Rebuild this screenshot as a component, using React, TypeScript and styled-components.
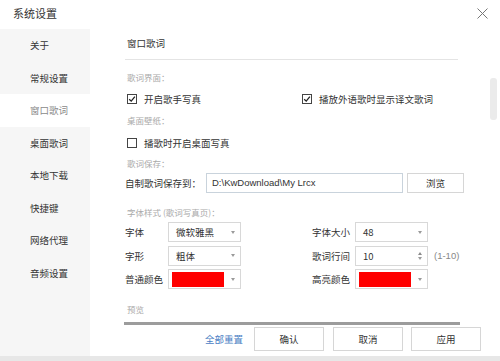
import styled, { createGlobalStyle } from "styled-components";

const GlobalStyle = createGlobalStyle`
  html, body {
    margin: 0;
    padding: 0;
    background: #ffffff;
  }
  body {
    font-family: "Noto Sans CJK SC", "Noto Sans", sans-serif;
    color: #333333;
  }
`;

const menuItems = ["关于", "常规设置", "窗口歌词", "桌面歌词", "本地下载", "快捷键", "网络代理", "音频设置"];

const Window = styled.div`
  width: 500px;
  height: 361px;
  display: flex;
  flex-direction: column;
  overflow: hidden;
  background: #ffffff;
`;

const TitleBar = styled.div`
  height: 29px;
  display: flex;
  align-items: center;
  justify-content: space-between;
  padding: 0 12px 3px 13px;
  box-sizing: border-box;
  font-size: 11px;
  color: #333;
`;

const Main = styled.div`
  flex: 1;
  display: flex;
  min-height: 0;
`;

const Sidebar = styled.div`
  width: 90px;
  background: #f6f6f6;
  display: flex;
  flex-direction: column;
`;

const MenuItem = styled.div<{ $active?: boolean }>`
  height: 32.5px;
  line-height: 32.5px;
  padding-left: 30px;
  font-size: 9.5px;
  background: ${(p) => (p.$active ? "#ffffff" : "transparent")};
  color: ${(p) => (p.$active ? "#8a8a8a" : "#333")};
`;

const Content = styled.div`
  flex: 1;
  padding-left: 35px;
  display: flex;
  flex-direction: column;
  font-size: 9.5px;
`;

const Header = styled.div`
  width: 333px;
  padding: 6px 0 8px 2px;
  line-height: 16px;
  border-bottom: 1px solid #e4e4e4;
  box-sizing: border-box;
  height: 31px;
`;

const SectionLabel = styled.div<{ $top?: number; $h?: number }>`
  margin-top: ${(p) => p.$top ?? 0}px;
  height: ${(p) => p.$h ?? 21}px;
  line-height: ${(p) => p.$h ?? 21}px;
  padding-left: 2px;
  font-size: 8.5px;
  color: #aaaaaa;
`;

const CheckRow = styled.div<{ $h: number }>`
  height: ${(p) => p.$h}px;
  display: flex;
  align-items: center;
  padding-left: 2px;
`;

const CheckItem = styled.label<{ $w?: number }>`
  display: flex;
  align-items: center;
  gap: 7px;
  width: ${(p) => (p.$w ? `${p.$w}px` : "auto")};
`;

const Box = styled.span`
  width: 10px;
  height: 10px;
  border: 1px solid #444;
  box-sizing: border-box;
  display: flex;
  align-items: center;
  justify-content: center;
  background: #fff;
`;

const PathRow = styled.div`
  height: 20px;
  display: flex;
  align-items: center;
`;

const PathLabel = styled.span`
  width: 81px;
`;

const PathInput = styled.div`
  width: 197px;
  height: 20px;
  box-sizing: border-box;
  border: 1px solid #c9d3dc;
  padding-left: 5px;
  line-height: 18px;
  font-family: "Liberation Sans", "Noto Sans CJK SC", sans-serif;
  font-size: 9.5px;
`;

const Button = styled.div<{ $w: number; $h: number }>`
  width: ${(p) => p.$w}px;
  height: ${(p) => p.$h}px;
  box-sizing: border-box;
  border: 1px solid #d6d6d6;
  background: #fff;
  display: flex;
  align-items: center;
  justify-content: center;
  font-size: 9.5px;
  color: #333;
`;

const FieldRow = styled.div`
  height: 20px;
  margin-bottom: 3.5px;
  display: flex;
  align-items: center;
`;

const FieldGroup = styled.div`
  width: 176px;
  display: flex;
  align-items: center;
`;

const FieldLabel = styled.span<{ $right?: boolean }>`
  width: ${(p) => (p.$right ? 54 : 43)}px;
  text-align: ${(p) => (p.$right ? "right" : "left")};
  padding-right: ${(p) => (p.$right ? 5 : 0)}px;
  box-sizing: border-box;
`;

const Select = styled.div`
  width: 73px;
  height: 20px;
  box-sizing: border-box;
  border: 1px solid #d8d8d8;
  display: flex;
  align-items: center;
  padding: 0 5px 0 7px;
  position: relative;
`;

const SelectText = styled.span`
  flex: 1;
  font-family: "Noto Sans CJK SC", "Liberation Sans", sans-serif;
`;

const Arrow = styled.span`
  width: 0;
  height: 0;
  border-left: 2.5px solid transparent;
  border-right: 2.5px solid transparent;
  border-top: 3px solid #9a9a9a;
`;

const Spinner = styled.span`
  display: flex;
  flex-direction: column;
  gap: 2px;
`;

const SpinUp = styled.span`
  width: 0;
  height: 0;
  border-left: 2.5px solid transparent;
  border-right: 2.5px solid transparent;
  border-bottom: 3px solid #8a8a8a;
`;

const Swatch = styled.span`
  flex: 1;
  height: 15px;
  background: #ff0000;
  margin: 0 7px 0 -4px;
`;

const Hint = styled.span`
  margin-left: 6px;
  color: #888;
  font-family: "Liberation Sans", sans-serif;
  font-size: 9.5px;
`;

const PreviewBar = styled.div`
  margin-top: 3px;
  width: 336px;
  height: 3px;
  background: #9c9c9c;
  margin-left: -1px;
`;

const Footer = styled.div`
  margin-top: 2px;
  width: 356px;
  display: flex;
  align-items: center;
  justify-content: flex-end;
  height: 24px;
`;

const ResetLink = styled.span`
  color: #4a80c4;
  margin-right: 11px;
  font-size: 9.5px;
`;

const ButtonGap = styled.span<{ $w: number }>`
  width: ${(p) => p.$w}px;
`;

const ScrollTrack = styled.div`
  width: 7px;
  margin-right: 3px;
  padding-top: 49px;
`;

const Thumb = styled.div`
  height: 42px;
  border-radius: 3px;
  background: #ebebeb;
`;

const BottomBand = styled.div`
  height: 5px;
  background: #e7e7e7;
`;

const Check = ({ checked }: { checked: boolean }) => (
  <Box>
    {checked && (
      <svg width="8" height="8" viewBox="0 0 8 8">
        <path d="M1.2 4.2 L3.2 6.1 L6.9 1.6" fill="none" stroke="#222" strokeWidth="1.3" />
      </svg>
    )}
  </Box>
);

const SelectBox = ({ text }: { text: string }) => (
  <Select>
    <SelectText>{text}</SelectText>
    <Arrow />
  </Select>
);

const ColorBox = () => (
  <Select>
    <Swatch />
    <Arrow />
  </Select>
);

export default function App() {
  return (
    <>
      <GlobalStyle />
      <Window>
        <TitleBar>
          <span>系统设置</span>
          <svg width="11" height="11" viewBox="0 0 11 11">
            <path d="M0.5 0.5 L10.5 10.5 M10.5 0.5 L0.5 10.5" stroke="#777" strokeWidth="1" />
          </svg>
        </TitleBar>
        <Main>
          <Sidebar>
            {menuItems.map((m, i) => (
              <MenuItem key={m} $active={i === 2}>
                {m}
              </MenuItem>
            ))}
          </Sidebar>
          <Content>
            <Header>窗口歌词</Header>
            <SectionLabel $top={6} $h={22}>歌词界面：</SectionLabel>
            <CheckRow $h={22}>
              <CheckItem $w={175}>
                <Check checked />
                开启歌手写真
              </CheckItem>
              <CheckItem>
                <Check checked />
                播放外语歌时显示译文歌词
              </CheckItem>
            </CheckRow>
            <SectionLabel $h={21}>桌面壁纸：</SectionLabel>
            <CheckRow $h={23}>
              <CheckItem>
                <Check checked={false} />
                播歌时开启桌面写真
              </CheckItem>
            </CheckRow>
            <SectionLabel $h={19}>歌词保存：</SectionLabel>
            <PathRow>
              <PathLabel>自制歌词保存到：</PathLabel>
              <PathInput>D:\KwDownload\My Lrcx</PathInput>
              <ButtonGap $w={4} />
              <Button $w={57} $h={20}>浏览</Button>
            </PathRow>
            <SectionLabel $top={9} $h={20}>字体样式 (歌词写真页)：</SectionLabel>
            <FieldRow>
              <FieldGroup>
                <FieldLabel>字体</FieldLabel>
                <SelectBox text="微软雅黑" />
              </FieldGroup>
              <FieldLabel $right>字体大小</FieldLabel>
              <SelectBox text="48" />
            </FieldRow>
            <FieldRow>
              <FieldGroup>
                <FieldLabel>字形</FieldLabel>
                <SelectBox text="粗体" />
              </FieldGroup>
              <FieldLabel $right>歌词行间</FieldLabel>
              <Select>
                <SelectText>10</SelectText>
                <Spinner>
                  <SpinUp />
                  <Arrow />
                </Spinner>
              </Select>
              <Hint>(1-10)</Hint>
            </FieldRow>
            <FieldRow>
              <FieldGroup>
                <FieldLabel>普通颜色</FieldLabel>
                <ColorBox />
              </FieldGroup>
              <FieldLabel $right>高亮颜色</FieldLabel>
              <ColorBox />
            </FieldRow>
            <SectionLabel $top={6.5} $h={20}>预览</SectionLabel>
            <PreviewBar />
            <Footer>
              <ResetLink>全部重置</ResetLink>
              <Button $w={70} $h={24}>确认</Button>
              <ButtonGap $w={9} />
              <Button $w={70} $h={24}>取消</Button>
              <ButtonGap $w={8} />
              <Button $w={70} $h={24}>应用</Button>
            </Footer>
          </Content>
          <ScrollTrack>
            <Thumb />
          </ScrollTrack>
        </Main>
        <BottomBand />
      </Window>
    </>
  );
}
